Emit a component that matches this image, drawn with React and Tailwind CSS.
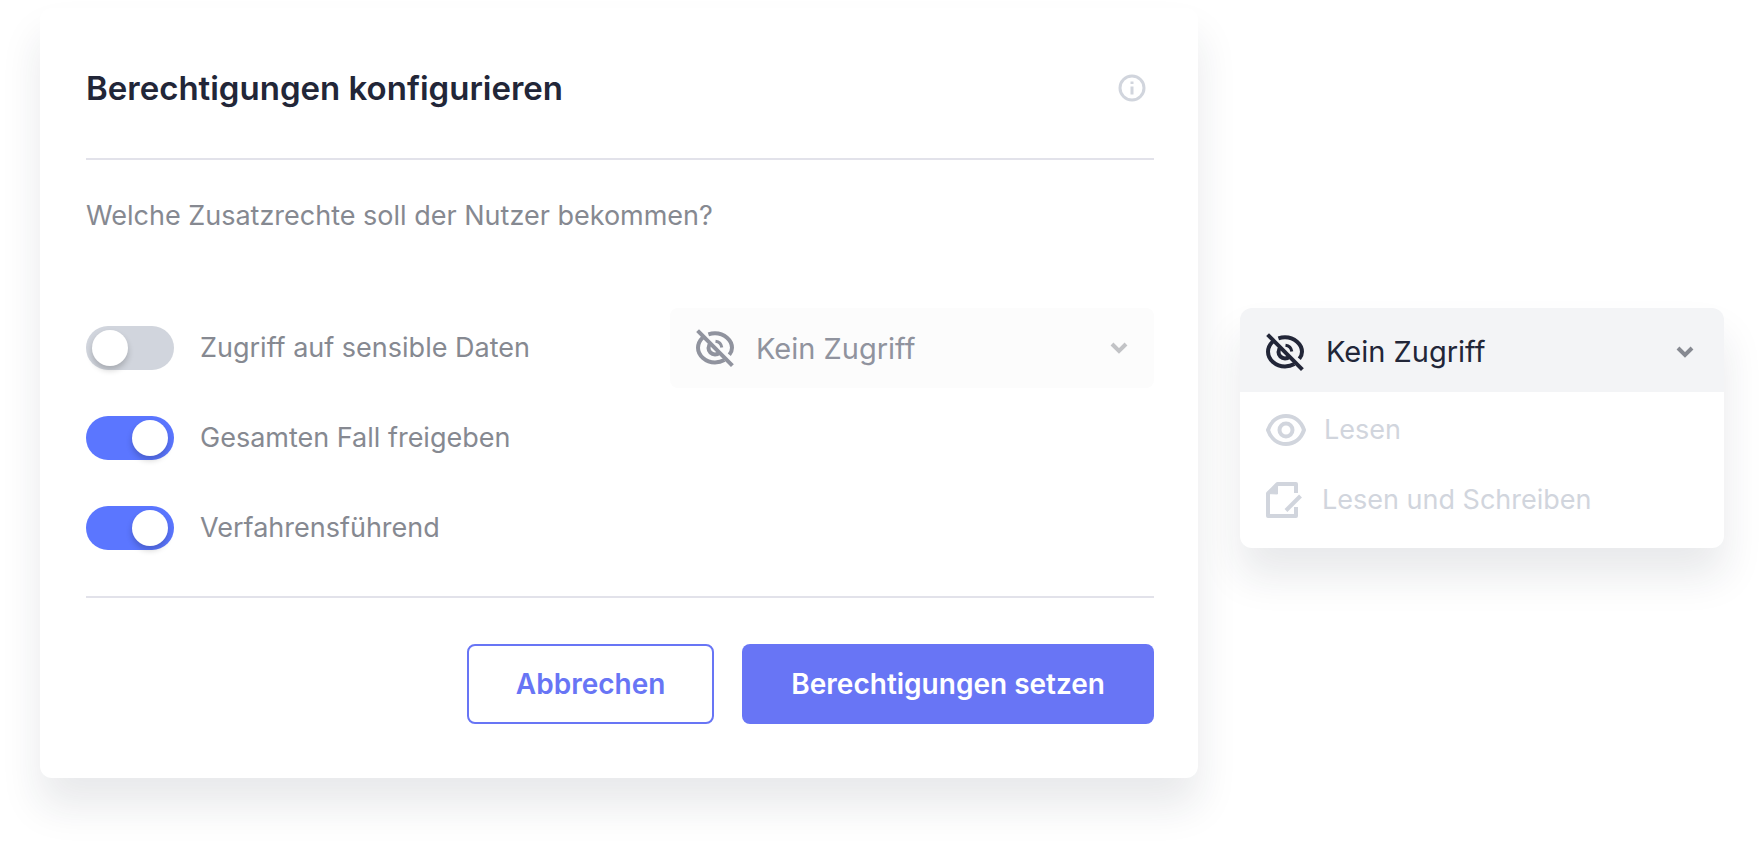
import React, { useState } from 'react'

const iconProps = { fill: 'none', stroke: 'currentColor', 'aria-hidden': true }

function EyeOffIcon({ className = '' }) {
  return (
    <svg viewBox="0 0 38 38" strokeWidth="4" className={`size-[38px] shrink-0 ${className}`} {...iconProps}>
      <path d="M12.4 5.400C14.500 4.700 16.700 4.300 19 4.300c9.400 0 17 7 17 14.500 0 2.600-1 5-2.700 7" />
      <path d="M6.700 8.600C3.800 11.400 2 15.200 2 18.800 2 26.500 9.600 33.500 19 33.500c3.500 0 6.700-.9 9.400-2.400" />
      <path d="M14.800 14c-1.400 1.200-2.300 3-2.300 4.900 0 3.600 2.900 6.500 6.500 6.500 1.900 0 3.700-.9 4.900-2.300" />
      <path d="M19.500 12.200c3.500.4 5.800 2.800 6.300 6.300" strokeWidth="3" />
      <path d="M1.600 1.600l34.800 35" />
    </svg>
  )
}

function EyeIcon({ className = '' }) {
  return (
    <svg viewBox="0 0 40 32" strokeWidth="4" strokeLinejoin="round" className={`w-10 h-8 shrink-0 ${className}`} {...iconProps}>
      <path d="M2 16C5 7 12 2 20 2s15 5 18 14c-3 9-10 14-18 14S5 25 2 16z" />
      <circle cx="20" cy="16" r="6.500" />
    </svg>
  )
}

function DocumentEditIcon({ className = '' }) {
  return (
    <svg viewBox="0 0 36 36" strokeWidth="4" strokeLinejoin="round" className={`size-9 shrink-0 ${className}`} {...iconProps}>
      <path d="M30 11V2H11.500L2 11.500V34h28v-9" />
      <path d="M1 11.500L11.500 1v11z" fill="currentColor" strokeWidth="1" />
      <path d="M34.500 14L20 28.500" />
    </svg>
  )
}

function ChevronIcon({ className = '' }) {
  return (
    <svg viewBox="0 0 18 12" strokeWidth="4" className={`w-[18px] h-3 shrink-0 ${className}`} {...iconProps}>
      <path d="M2 2l7 7 7-7" />
    </svg>
  )
}

function InfoIcon() {
  return (
    <svg viewBox="0 0 28 28" strokeWidth="3" className="size-7" {...iconProps}>
      <circle cx="14" cy="14" r="12" />
      <path d="M14 12.500v8M14 7.500v2.500" />
    </svg>
  )
}

function Toggle({ label, checked, onChange }) {
  return (
    <label className="flex h-11 items-center gap-[26px] text-[27px] leading-8 text-[#868991]">
      <input
        type="checkbox"
        role="switch"
        checked={checked}
        onChange={(e) => onChange(e.target.checked)}
        className="h-11 w-[88px] shrink-0 cursor-pointer appearance-none rounded-full bg-[#d1d5dd] px-1.5 py-1 before:block before:size-9 before:rounded-full before:bg-white before:shadow-[0_4px_6px_rgba(0,0,0,0.2)] checked:bg-[#5b76ff] checked:before:ml-10"
      />
      {label}
    </label>
  )
}

const rights = [
  { id: 'sensitive', label: 'Zugriff auf sensible Daten' },
  { id: 'case', label: 'Gesamten Fall freigeben' },
  { id: 'lead', label: 'Verfahrensführend' }
]

function PermissionCard() {
  const [enabled, setEnabled] = useState({ sensitive: false, case: true, lead: true })

  return (
    <section className="min-w-0 flex-1 rounded-xl bg-white pt-[60px] pr-11 pb-[54px] pl-[46px] shadow-[0_28px_40px_rgba(34,40,60,0.1)]">
      <header className="flex items-center justify-between border-b-2 border-[#e2e2ea] pr-2 pb-[50px]">
        <h1 className="text-[33px] leading-10 font-semibold text-[#222638]">Berechtigungen konfigurieren</h1>
        <button type="button" aria-label="Info" className="text-[#d1d5dd]">
          <InfoIcon />
        </button>
      </header>

      <p className="pt-10 text-[27px] leading-8 text-[#868991]">Welche Zusatzrechte soll der Nutzer bekommen?</p>

      <div className="mt-[76px] flex items-start justify-between border-b-2 border-[#e2e2ea] pb-[46px]">
        <div className="flex flex-col gap-[46px] pt-[18px]">
          {rights.map((r) => (
            <Toggle
              key={r.id}
              label={r.label}
              checked={enabled[r.id]}
              onChange={(value) => setEnabled({ ...enabled, [r.id]: value })}
            />
          ))}
        </div>
        <div className="grid w-[484px] grid-cols-1 items-center">
          <select
            aria-label="Zugriff auf sensible Daten"
            disabled
            className="col-start-1 row-start-1 h-20 w-full appearance-none rounded-lg bg-[#fcfcfc] pt-0.5 pl-[86px] text-[29px] text-[#90939e] opacity-100"
          >
            <option>Kein Zugriff</option>
            <option>Lesen</option>
            <option>Lesen und Schreiben</option>
          </select>
          <div className="pointer-events-none col-start-1 row-start-1 flex items-center justify-between px-[26px] text-[#90939e]">
            <EyeOffIcon />
            <ChevronIcon className="text-[#c2c3c6]" />
          </div>
        </div>
      </div>

      <footer className="flex justify-end gap-7 pt-[46px] text-[28px] font-semibold">
        <button type="button" className="h-20 rounded-lg border-2 border-[#6875f5] px-[47px] text-[#6875f5]">
          Abbrechen
        </button>
        <button type="button" className="h-20 rounded-lg bg-[#6875f5] px-[49px] text-white">
          Berechtigungen setzen
        </button>
      </footer>
    </section>
  )
}

function AccessMenu() {
  return (
    <div className="mt-[300px] w-[484px] shrink-0 rounded-xl bg-white shadow-[0_28px_40px_rgba(34,40,60,0.1)]">
      <button
        type="button"
        aria-expanded="true"
        className="flex h-[84px] w-full items-center rounded-t-xl bg-[#f3f4f6] pt-1 pr-[30px] pl-[26px] text-[29px] text-[#222638]"
      >
        <EyeOffIcon />
        <span className="ml-[22px] flex-1 text-left">Kein Zugriff</span>
        <ChevronIcon className="text-[#868991]" />
      </button>
      <ul className="flex flex-col gap-8 px-[26px] pt-[19px] pb-[29px] text-[27px] text-[#d1d5dd]">
        <li>
          <button type="button" className="flex h-[38px] w-full items-center gap-[18px]">
            <EyeIcon />
            Lesen
          </button>
        </li>
        <li>
          <button type="button" className="flex h-[38px] w-full items-center gap-5">
            <DocumentEditIcon />
            Lesen und Schreiben
          </button>
        </li>
      </ul>
    </div>
  )
}

export default function App() {
  return (
    <main className="flex items-start gap-[42px] bg-white px-10 pt-2 pb-[70px] font-[Inter,sans-serif]">
      <PermissionCard />
      <AccessMenu />
    </main>
  )
}
